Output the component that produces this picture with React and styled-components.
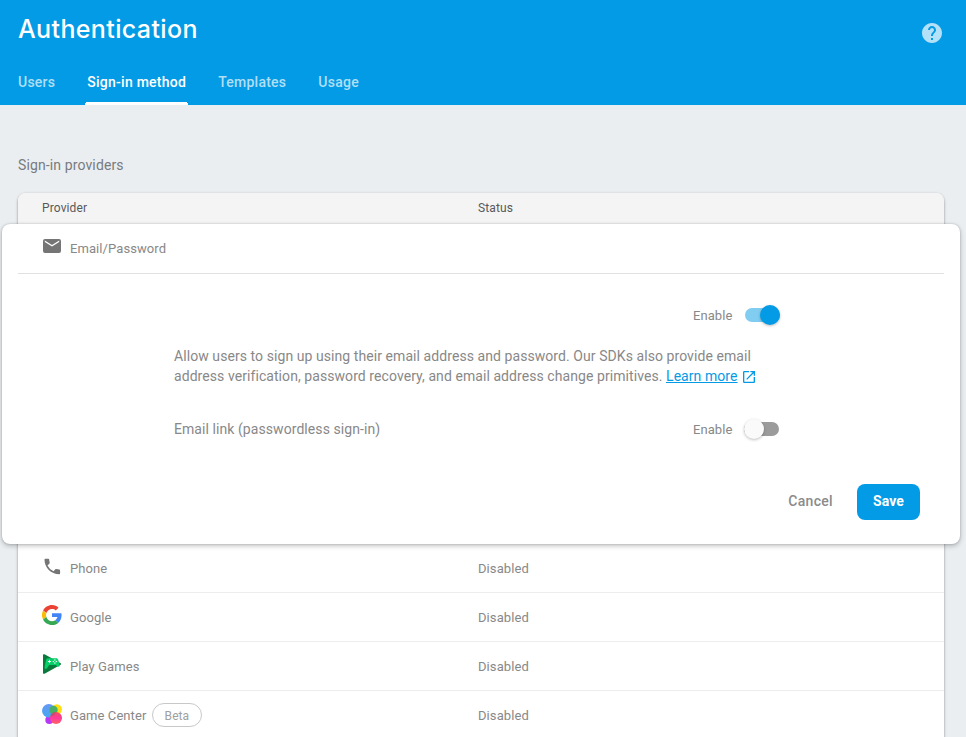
import React from "react";
import styled, { createGlobalStyle } from "styled-components";

const GlobalStyle = createGlobalStyle`
  * { box-sizing: border-box; }
  html, body { margin: 0; }
  body {
    height: 737px;
    overflow: hidden;
    background: #eaeef1;
    color: #888;
    font-family: Roboto, "Liberation Sans", sans-serif;
    font-size: 14px;
  }
  button { font: inherit; border: 0; background: none; padding: 0; }
`;

const Page = styled.div`
  width: 966px;
  height: 737px;
  overflow: hidden;
`;

const Header = styled.header`
  height: 105px;
  background: #039be5;
  display: flex;
  flex-direction: column;
  justify-content: space-between;
`;

const TitleBar = styled.div`
  display: flex;
  justify-content: space-between;
  align-items: flex-start;
  padding: 13px 22px 0 18px;
`;

const Title = styled.h1`
  margin: 0;
  color: #fff;
  font: 550 25px/32px Inter, Roboto, sans-serif;
  letter-spacing: 0.37px;
`;

const HelpIcon = styled.svg`
  width: 24px;
  height: 24px;
  margin-top: 8px;
  fill: #b3e1f7;
`;

const Tabs = styled.nav`
  display: flex;
  padding-left: 16px;
  gap: 28px;
`;

const Tab = styled.a`
  height: 45px;
  padding: 13px 2px 0;
  font-weight: 500;
  line-height: 19px;
  letter-spacing: 0.25px;
  color: ${(p) => (p.$active ? "#fff" : "#b0dff6")};
  background: ${(p) =>
    p.$active
      ? "radial-gradient(circle at 3px 3px, #fff 3px, transparent 3.3px) 0 42px / 3px 3px no-repeat, radial-gradient(circle at 0 3px, #fff 3px, transparent 3.3px) 100% 42px / 3px 3px no-repeat, linear-gradient(#fff, #fff) 50% 42px / calc(100% - 6px) 3px no-repeat"
      : "none"};
`;

const Content = styled.main`
  padding-top: 50px;
`;

const SectionTitle = styled.h2`
  margin: 0 0 18px 18px;
  font-weight: 400;
  font-size: 14px;
  line-height: 20px;
  letter-spacing: 0.12px;
  color: #787b7e;
`;

const Table = styled.section`
  margin: 0 22px 0 18px;
  height: 560px;
  border-radius: 8px;
  background: #fff;
  box-shadow: 0 1px 3px rgba(0, 0, 0, 0.32), 0 1px 2px rgba(0, 0, 0, 0.12);
`;

const TableHead = styled.div`
  height: 31px;
  display: grid;
  grid-template-columns: 436px 1fr;
  padding-left: 24px;
  border-radius: 8px 8px 0 0;
  background: #f4f4f4;
  color: #595959;
  font-size: 12px;
  line-height: 30px;
  letter-spacing: 0.12px;
`;

const Panel = styled.section`
  position: relative;
  height: 320px;
  margin: 0 -16px;
  padding: 0 16px;
  border-radius: 8px;
  background: #fff;
  box-shadow: 0 2px 5px rgba(0, 0, 0, 0.24), 0 0 2px rgba(0, 0, 0, 0.22);
`;

const Row = styled.div`
  height: ${(p) => p.$height || 49}px;
  display: grid;
  grid-template-columns: 436px 1fr;
  align-items: center;
  padding-left: 24px;
  border-bottom: 1px solid ${(p) => p.$line || "#ededed"};
  font-size: 13px;
  letter-spacing: 0.08px;
`;

const Provider = styled.div`
  display: flex;
  align-items: center;
  gap: 8px;
`;

const RowIcon = styled.svg`
  width: 20px;
  height: 20px;
  margin-bottom: ${(p) => p.$lift || 4}px;
`;

const Badge = styled.span`
  width: 50px;
  height: 24px;
  margin-left: -2.5px;
  border: 1px solid #c8c8c8;
  border-radius: 12px;
  color: #a0a0a0;
  font-size: 12px;
  line-height: 24px;
  text-align: center;
`;

const Settings = styled.div`
  width: 607px;
  margin-left: 156px;
  padding-top: 31px;
`;

const Setting = styled.div`
  height: 20px;
  display: flex;
  align-items: center;
  justify-content: ${(p) => (p.$end ? "flex-end" : "space-between")};
  letter-spacing: 0.07px;
`;

const SwitchLabel = styled.label`
  display: flex;
  align-items: center;
  gap: 10px;
  font-size: 13px;
  letter-spacing: 0.1px;
`;

const Track = styled.span`
  width: 35px;
  height: 14px;
  margin: ${(p) => (p.$on ? "0 1px 0 2.5px" : "0 2px 0 1.5px")};
  border-radius: 7px;
  background: ${(p) => (p.$on ? "#81cdf2" : "#9b9b9b")};
  display: flex;
  align-items: center;
  justify-content: ${(p) => (p.$on ? "flex-end" : "flex-start")};
`;

const Thumb = styled.span`
  flex: none;
  width: 20px;
  height: 20px;
  border-radius: 50%;
  background: ${(p) => (p.$on ? "#039be5" : "#fafafa")};
  box-shadow: 0 1px 3px rgba(0, 0, 0, 0.26);
`;

const Description = styled.p`
  margin: 21px 0 33px;
  line-height: 20px;
  letter-spacing: 0.07px;
  white-space: nowrap;
`;

const Link = styled.a`
  color: #039be5;
  text-decoration: underline;
`;

const OpenIcon = styled.svg`
  width: 16px;
  height: 16px;
  margin-left: 3px;
  vertical-align: -4px;
  fill: #039be5;
`;

const Actions = styled.div`
  display: flex;
  justify-content: flex-end;
  align-items: center;
  gap: 24px;
  margin-top: 45px;
  padding-right: 24px;
`;

const CancelButton = styled.button`
  color: #8b8b8b;
  font-weight: 500;
  letter-spacing: 0.32px;
  line-height: 34px;
  padding-bottom: 2px;
`;

const SaveButton = styled.button`
  width: 63px;
  height: 36px;
  border-radius: 8px;
  background: #039be5;
  color: #fff;
  font-weight: 700;
  letter-spacing: 0.1px;
  line-height: 34px;
  padding-bottom: 2px;
`;

const MailIcon = () => (
  <RowIcon viewBox="0 0 20 20" $lift={5}>
    <path fill="#757575" d="M3 3h14a2 2 0 0 1 2 2v10a2 2 0 0 1-2 2H3a2 2 0 0 1-2-2V5a2 2 0 0 1 2-2zm7 7.400L17.200 6V4.500L10 9 2.800 4.500V6z" />
  </RowIcon>
);

const PhoneIcon = () => (
  <RowIcon viewBox="0 0 20 20" $lift={3}>
    <path fill="#757575" d="M5.500 8.400a13 13 0 0 0 6 5.800l1.900-1.900c.3-.3.6-.3.9-.2 1 .3 2 .5 3 .5.5 0 .8.3.8.8v3c0 .5-.3.8-.8.8C9 17.200 2.500 10.700 2.500 2.500c0-.5.3-.8.8-.8h3.100c.5 0 .8.3.8.8 0 1 .2 2 .5 3 .1.3 0 .6-.2.9z" />
  </RowIcon>
);

const GoogleIcon = () => (
  <RowIcon viewBox="2 2 44 44">
    <path fill="#EA4335" d="M24 10.800c3.300 0 6 1.100 8.200 3.200l6.200-6.200C34.700 4.400 30 2 24 2 15.400 2 8 6.900 4.400 14.100l7.200 5.600c1.700-5.100 6.500-8.900 12.400-8.900z" />
    <path fill="#4285F4" d="M45.100 24.500c0-1.600-.1-2.900-.4-4.500H24v8.500h11.900c-.6 3.100-2.300 5.300-4.800 7l7 5.400c4.300-3.900 7-9.600 7-16.400z" />
    <path fill="#FBBC05" d="M11.600 28.300a13.200 13.200 0 0 1 0-8.600l-7.200-5.600a22 22 0 0 0 0 19.800z" />
    <path fill="#34A853" d="M24 46c5.900 0 10.900-2 14.100-5.100l-7-5.400c-1.900 1.300-4.400 2.100-7.100 2.100-5.900 0-10.700-4-12.400-9.300l-7.200 5.600C8 41.100 15.400 46 24 46z" />
  </RowIcon>
);

const PlayGamesIcon = () => (
  <RowIcon viewBox="0 0 20 20">
    <path fill="#087a3b" d="M1 1.300C1 0 2 .1 3 .6l15.200 8.300c1.200.7 1.200 1.500 0 2.200L3 19.500c-1 .6-2 .5-2-.8z" />
    <path fill="#08ce67" d="M4 6C4.300 4.800 5 4.200 6.200 4.200h8c1 0 1.600.6 2 1.600l1.400 4.600c.5 2-1 2.800-2.300 1.800L13.600 11H7.200l-2 3c-1.200 1.600-2.800.9-2.600-1z" />
    <path stroke="#e7fff2" strokeWidth="1" d="M7.500 5.900v3.200M5.900 7.500h3.200" />
    <g fill="#e7fff2"><circle cx="12.900" cy="6" r=".75" /><circle cx="12.900" cy="9" r=".75" /><circle cx="11.400" cy="7.500" r=".75" /><circle cx="14.400" cy="7.500" r=".75" /></g>
  </RowIcon>
);

const GameCenterIcon = () => (
  <RowIcon viewBox="0 0 20 20" $lift={2}>
    <defs>
      <linearGradient id="blueBall" x2="0" y2="1"><stop stopColor="#6797f5" /><stop offset="1" stopColor="#42a9ef" /></linearGradient>
      <linearGradient id="pinkBall" x2="0" y2="1"><stop stopColor="#f64a5d" /><stop offset=".5" stopColor="#ff389b" /><stop offset="1" stopColor="#ff6564" /></linearGradient>
    </defs>
    <circle cx="7.300" cy="16" r="4" fill="#b638f5" />
    <circle cx="14.800" cy="5.400" r="5.200" fill="#ffdf12" />
    <circle cx="6.800" cy="6.800" r="6.800" fill="url(#blueBall)" />
    <circle cx="11.500" cy="6" r="4.200" fill="#48ae68" />
    <circle cx="14" cy="14" r="6" fill="url(#pinkBall)" />
    <path d="M8.300 12.300a6 6 0 0 1 5-4.200c1 1.500-1.300 4.200-5 4.200z" fill="#9b5667" opacity=".55" />
  </RowIcon>
);

const providers = [
  { name: "Phone", Icon: PhoneIcon },
  { name: "Google", Icon: GoogleIcon },
  { name: "Play Games", Icon: PlayGamesIcon },
  { name: "Game Center", Icon: GameCenterIcon, beta: true },
];

const EnableSwitch = ({ on }) => (
  <SwitchLabel>
    Enable
    <Track $on={on}><Thumb $on={on} /></Track>
  </SwitchLabel>
);

export default function App() {
  return (
    <Page>
      <GlobalStyle />
      <Header>
        <TitleBar>
          <Title>Authentication</Title>
          <HelpIcon viewBox="0 0 24 24">
            <path d="M12 2C6.480 2 2 6.480 2 12s4.480 10 10 10 10-4.480 10-10S17.520 2 12 2zm1 17h-2v-2h2v2zm2.070-7.750-.9.920C13.450 12.900 13 13.500 13 15h-2v-.5c0-1.100.45-2.100 1.170-2.830l1.240-1.260c.37-.36.590-.86.590-1.410 0-1.100-.9-2-2-2s-2 .9-2 2H8c0-2.210 1.790-4 4-4s4 1.790 4 4c0 .880-.36 1.680-.93 2.250z" />
          </HelpIcon>
        </TitleBar>
        <Tabs>
          <Tab>Users</Tab>
          <Tab $active>Sign-in method</Tab>
          <Tab>Templates</Tab>
          <Tab>Usage</Tab>
        </Tabs>
      </Header>
      <Content>
        <SectionTitle>Sign-in providers</SectionTitle>
        <Table>
          <TableHead><span>Provider</span><span>Status</span></TableHead>
          <Panel>
            <Row $height={50} $line="#e0e0e0">
              <Provider><MailIcon />Email/Password</Provider>
            </Row>
            <Settings>
              <Setting $end><EnableSwitch on /></Setting>
              <Description>
                Allow users to sign up using their email address and password. Our SDKs also provide email<br />
                address verification, password recovery, and email address change primitives. <Link>Learn more</Link>
                <OpenIcon viewBox="0 0 24 24">
                  <path d="M19 19H5V5h7V3H5a2 2 0 0 0-2 2v14a2 2 0 0 0 2 2h14c1.100 0 2-.9 2-2v-7h-2v7zM14 3v2h3.590l-9.830 9.830 1.410 1.410L19 6.410V10h2V3h-7z" />
                </OpenIcon>
              </Description>
              <Setting><span>Email link (passwordless sign-in)</span><EnableSwitch /></Setting>
            </Settings>
            <Actions>
              <CancelButton>Cancel</CancelButton>
              <SaveButton>Save</SaveButton>
            </Actions>
          </Panel>
          {providers.map(({ name, Icon, beta }) => (
            <Row key={name}>
              <Provider><Icon />{name}{beta && <Badge>Beta</Badge>}</Provider>
              <span>Disabled</span>
            </Row>
          ))}
        </Table>
      </Content>
    </Page>
  );
}
